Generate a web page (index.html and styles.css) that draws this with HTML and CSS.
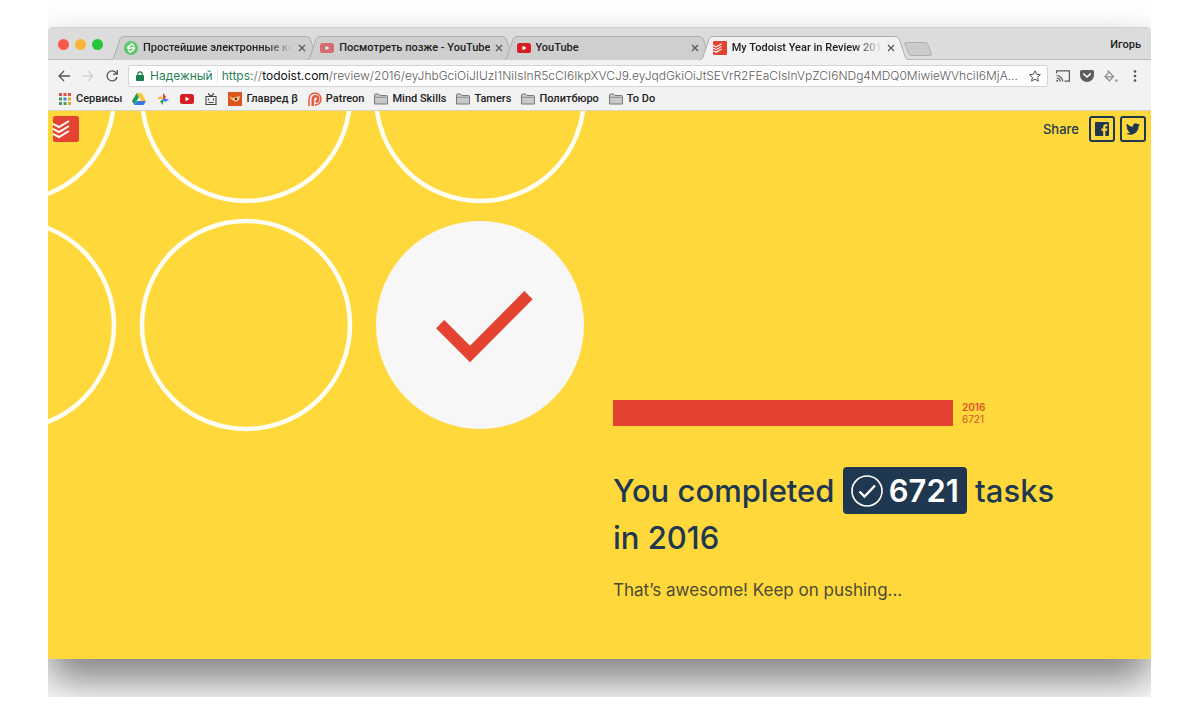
FILE: index.html
```html
<!DOCTYPE html>
<html lang="en">
<head>
<meta charset="utf-8">
<title>My Todoist Year in Review 2016</title>
<link rel="stylesheet" href="styles.css">
</head>
<body>
<svg class="defs" aria-hidden="true">
  <symbol id="tab-shape" viewBox="0 0 210 24" preserveAspectRatio="none"><path d="M0 24C2 24 3 23 4 21L10 3Q11 .5 14 .5H196Q199 .5 200 3L206 21C207 23 208 24 210 24" vector-effect="non-scaling-stroke"/></symbol>
  <symbol id="todoist" viewBox="0 0 26 26"><rect width="26" height="26" rx="2.500" fill="#e44332"/><path d="M0 8l6 3L16 5M0 13l6 3 10-6M0 18l6 3 10-6" fill="none" stroke="#fff" stroke-width="2"/></symbol>
  <symbol id="youtube" viewBox="0 0 14 10"><rect width="14" height="10" rx="2.500" fill="#d51f24"/><path d="M5.500 2.700v4.600L9.500 5z" fill="#fff"/></symbol>
  <symbol id="folder" viewBox="0 0 14 11"><path d="M.5 10.500V1.500Q.5.500 1.500.500H4.500L6 2H12.500Q13.500 2 13.500 3V10.500Z" fill="#c9c8ca" stroke="#79797b"/><path d="M1 3.800H13" stroke="#8f8f91"/></symbol>
  <symbol id="close" viewBox="0 0 8 8"><path d="M1 1l6 6M7 1L1 7" stroke="#555" stroke-width="1.200"/></symbol>
</svg>
<div class="stage">
<div class="window">
  <div class="tabstrip">
    <div class="lights"><button class="light red" aria-label="Close window"></button><button class="light amber" aria-label="Minimize"></button><button class="light green" aria-label="Zoom"></button></div>
    <div class="tabs">
      <div class="tab"><svg class="shape"><use href="#tab-shape"/></svg>
        <svg class="fav" viewBox="0 0 14 14"><circle cx="7" cy="7" r="7" fill="#5cc76c"/><path d="M10 5L7.800 2.800 3.600 6.600Q3.400 7.400 4.400 7.400L9.600 6.600Q10.600 6.600 10.400 7.600L6.400 11.200 4 9" fill="none" stroke="#fff" stroke-width="1.500" stroke-linejoin="round"/></svg>
        <span class="title fade">Простейшие электронные ко</span><button class="x" aria-label="Close tab"><svg><use href="#close"/></svg></button></div>
      <div class="tab"><svg class="shape"><use href="#tab-shape"/></svg><svg class="fav dim"><use href="#youtube"/></svg><span class="title">Посмотреть позже - YouTube</span><button class="x" aria-label="Close tab"><svg><use href="#close"/></svg></button></div>
      <div class="tab"><svg class="shape"><use href="#tab-shape"/></svg><svg class="fav"><use href="#youtube"/></svg><span class="title">YouTube</span><button class="x" aria-label="Close tab"><svg><use href="#close"/></svg></button></div>
      <div class="tab active"><svg class="shape"><use href="#tab-shape"/></svg><svg class="fav"><use href="#todoist"/></svg><span class="title fade">My Todoist Year in Review 201</span><button class="x" aria-label="Close tab"><svg><use href="#close"/></svg></button></div>
    </div>
    <button class="newtab" aria-label="New tab"><svg viewBox="0 0 28 14"><path d="M1.500 .5H22Q23 .5 24 2.500L27.500 12Q28 13.500 26.500 13.500H7Q5.500 13.500 5 12L.8 2Q.3.500 1.500.500Z" fill="#cbcbcb" stroke="#b0b0b0"/></svg></button>
    <button class="profile">Игорь</button>
  </div>
  <div class="toolbar">
    <button class="tool" aria-label="Back"><svg viewBox="0 0 12 12"><path d="M12 6H1M6 1L1 6l5 5" fill="none" stroke="#555" stroke-width="1.300"/></svg></button>
    <button class="tool" aria-label="Forward"><svg viewBox="0 0 12 12"><path d="M0 6h11M6 1l5 5-5 5" fill="none" stroke="#d2d2d2" stroke-width="1.300"/></svg></button>
    <button class="tool" aria-label="Reload"><svg viewBox="0 0 12 12"><path d="M10.500 3.500A5 5 0 1 0 11 7M11.300 0V4.200H7" fill="none" stroke="#555" stroke-width="1.300"/></svg></button>
    <div class="omnibox">
      <svg class="lock" viewBox="0 0 8 10"><rect y="4" width="8" height="6" rx="1" fill="#17804b"/><path d="M1.800 5V3a2.200 2.200 0 0 1 4.400 0v2" fill="none" stroke="#17804b" stroke-width="1.200"/></svg>
      <span class="secure">Надежный</span>
      <label class="origin" for="path"><span class="scheme">https:</span><span class="slashes">//</span>todoist.com</label>
      <input id="path" class="path" value="/review/2016/eyJhbGciOiJIUzI1NiIsInR5cCI6IkpXVCJ9.eyJqdGkiOiJtSEVrR2FEaCIsInVpZCI6NDg4MDQ0MiwieWVhciI6MjA...">
      <button class="tool star" aria-label="Bookmark"><svg viewBox="0 0 12 12"><path d="M6 .8l1.600 3.500 3.800.4-2.800 2.600.8 3.900L6 9.200l-3.400 2 .8-3.900L.6 4.700l3.800-.4z" fill="none" stroke="#555"/></svg></button>
    </div>
    <div class="extensions">
      <button class="tool" aria-label="Cast"><svg viewBox="0 0 14 12"><path d="M.6 3.500V.8H13.400V11.200H8.500M.6 5.500a6 6 0 0 1 6 6M.6 8a3.500 3.500 0 0 1 3.500 3.500" fill="none" stroke="#5a5a5a" stroke-width="1.200"/><circle cx="1.200" cy="10.800" r="1" fill="#5a5a5a"/></svg></button>
      <button class="tool" aria-label="Pocket"><svg viewBox="0 0 14 12"><path d="M1.500 0h11Q14 0 14 1.500V5A7 7 0 0 1 0 5V1.500Q0 0 1.500 0Z" fill="#5e5e60"/><path d="M3.800 4L7 7l3.200-3" fill="none" stroke="#fff" stroke-width="1.700" stroke-linecap="round" stroke-linejoin="round"/></svg></button>
      <button class="tool" aria-label="Colour"><svg viewBox="0 0 14 12"><path d="M3.500 .5l6 6L5.500 10.800 1 6.500 5 2.200M1.500 6.800H9" fill="none" stroke="#8c8c8c" stroke-width="1.200"/><circle cx="12.300" cy="10.500" r="1.300" fill="#999"/></svg></button>
      <button class="tool" aria-label="Menu"><svg viewBox="0 0 14 12"><g fill="#4e4e4e"><circle cx="7" cy="1.500" r="1.300"/><circle cx="7" cy="6" r="1.300"/><circle cx="7" cy="10.500" r="1.300"/></g></svg></button>
    </div>
  </div>
  <nav class="bookmarks">
    <a href="#"><svg class="bm" viewBox="0 0 12 12"><path d="M0 0h3v3H0zM9 0h3v3H9zM4.500 0h3v3h-3z" fill="#e15241"/><path d="M0 4.500h3v3H0z" fill="#3f9d5a"/><path d="M4.500 4.500h3v3h-3z" fill="#4285d4"/><path d="M9 4.500h3v3H9zM9 9h3v3H9z" fill="#e6a52c"/><path d="M0 9h3v3H0zM4.500 9h3v3h-3z" fill="#4c9d63"/></svg>Сервисы</a>
    <a href="#" aria-label="Drive"><svg class="bm" viewBox="0 0 14 12"><path d="M4.700 0L0 8l2.300 4L7 4z" fill="#1f9d58"/><path d="M4.700 0h4.600L14 8H9.300z" fill="#f9c72f"/><path d="M4.700 8H14l-2.300 4H2.300z" fill="#3978e0"/></svg></a>
    <a href="#" aria-label="Photos"><svg class="bm" viewBox="0 0 12 12"><path d="M6 0L9 3.500 6 6z" fill="#e94435"/><path d="M12 6L8.500 9 6 6z" fill="#4285f4"/><path d="M6 12L3 8.500 6 6z" fill="#2f9f57"/><path d="M0 6l3.500-3L6 6z" fill="#f8b82b"/><path d="M6 3.500L8.500 3 8.500 6H6z" fill="#e94435"/><path d="M6 6h2.500L8 8.500H6z" fill="#4285f4"/></svg></a>
    <a href="#" aria-label="YouTube"><svg class="bm"><use href="#youtube"/></svg></a>
    <a href="#" aria-label="TV"><svg class="bm" viewBox="0 0 12 12"><path d="M1 3.500h10v8H1zM3 .5l3 3 3-3" fill="none" stroke="#444" stroke-width="1.100"/><path d="M3.500 5.500v2M8.500 5.500v2M3.500 9.500h5" stroke="#444" stroke-width="1.200"/></svg></a>
    <a href="#"><svg class="bm tall" viewBox="0 0 14 14"><rect width="14" height="14" fill="#dd541f"/><path d="M1 4l4 2 3-1 4-1-1 4-3 2-2-1-2-1z" fill="#f5c590"/><circle cx="8" cy="7" r="1.200" fill="#5b2414"/></svg>Главред β</a>
    <a href="#"><svg class="bm tall" viewBox="0 0 14 14"><path d="M1 14V7a6 6 0 1 1 6 6" fill="none" stroke="#e6593e" stroke-width="1.500"/><path d="M4.800 14V7A2.700 2.700 0 1 1 7.500 9.700" fill="none" stroke="#e6593e" stroke-width="2.600"/></svg>Patreon</a>
    <a href="#"><svg class="bm"><use href="#folder"/></svg>Mind Skills</a>
    <a href="#"><svg class="bm"><use href="#folder"/></svg>Tamers</a>
    <a href="#"><svg class="bm"><use href="#folder"/></svg>Политбюро</a>
    <a href="#"><svg class="bm"><use href="#folder"/></svg>To Do</a>
  </nav>
  <main class="page">
    <svg class="circles" viewBox="0 0 540 324" aria-hidden="true">
      <g fill="none" stroke="#fffef4" stroke-width="4.500"><circle cx="-38" cy="-14" r="104"/><circle cx="198" cy="-14" r="104"/><circle cx="432" cy="-14" r="104"/><circle cx="-38" cy="214" r="104"/><circle cx="198" cy="214" r="104"/></g>
      <circle cx="432" cy="214" r="104" fill="#f7f7f7"/>
      <path d="M388 217.300L396.300 209 422 234.700 476.300 180l8.400 8.300L422 251.300z" fill="#e44332"/>
    </svg>
    <a class="logo" href="#" aria-label="Todoist"><svg><use href="#todoist"/></svg></a>
    <div class="share"><span>Share</span>
      <a href="#" aria-label="Facebook"><svg viewBox="0 0 14 14"><path d="M1 0H13Q14 0 14 1V13Q14 14 13 14H10.300V8.700H12L12.300 6.600H10.300V5.200Q10.300 4.200 11.400 4.200H12.400V2.300H10.800Q8.200 2.300 8.200 4.900V6.600H6.400V8.700H8.200V14H1Q0 14 0 13V1Q0 0 1 0Z" fill="#20384f"/></svg></a>
      <a href="#" aria-label="Twitter"><svg viewBox="0 0 24 24"><path d="M24 4.600a10 10 0 0 1-2.800.8 5 5 0 0 0 2.100-2.700 10 10 0 0 1-3.100 1.200 4.900 4.900 0 0 0-8.400 4.500A14 14 0 0 1 1.700 3.200a4.900 4.900 0 0 0 1.500 6.500 5 5 0 0 1-2.200-.6 4.900 4.900 0 0 0 3.900 4.900 5 5 0 0 1-2.200.1 4.900 4.900 0 0 0 4.600 3.400A10 10 0 0 1 0 19.500a14 14 0 0 0 21.500-12.400A10 10 0 0 0 24 4.600z" fill="#20384f"/></svg></a>
    </div>
    <section class="summary">
      <div class="chart"><div class="bar"></div><div class="legend"><b>2016</b><span>6721</span></div></div>
      <h1>You completed <span class="badge"><svg viewBox="0 0 32 32"><circle cx="16" cy="16" r="15" fill="none" stroke="#fff" stroke-width="1.600"/><path d="M8.500 16.500l5 5L24 10.500" fill="none" stroke="#fff" stroke-width="2.400"/></svg>6721</span> tasks<br>in 2016</h1>
      <p>That’s awesome! Keep on pushing...</p>
    </section>
  </main>
</div>
</div>
</body>
</html>
```
FILE: styles.css
```css
* { box-sizing: border-box; }
body { margin: 0; background: #fff; font-family: Inter, "Noto Sans", sans-serif; color: #222; }
button { border: 0; padding: 0; background: none; font: inherit; color: inherit; }
a { color: inherit; text-decoration: none; }
svg { display: block; }
.defs { position: absolute; width: 0; height: 0; }
.stage { margin: 0 48px; padding: 27px 0 38px; overflow: hidden; }
.window { border-radius: 5px 5px 3px 3px; box-shadow: 0 22px 41px rgba(0, 0, 0, .5); background: #f2f2f2; }

.tabstrip { display: flex; align-items: flex-end; height: 33px; background: #dcdcdc; border-radius: 5px 5px 0 0; border-top: 1px solid #d0d0d0; box-shadow: inset 0 -1px #bdbdbd; }
.lights { display: flex; gap: 6px; width: 62px; padding: 0 0 10px 10px; }
.light { width: 11px; height: 11px; border-radius: 50%; flex: none; }
.red { background: #f9584f; }
.amber { background: #fbb53a; }
.green { background: #27c53d; }
.tabs { display: flex; flex: 0 1 799px; min-width: 0; }
.tab { position: relative; flex: 1 1 0; min-width: 0; height: 24px; display: flex; align-items: center; gap: 5px; padding: 0 14px; margin-right: -14px; font-family: Roboto, "Noto Sans", sans-serif; font-size: 11px; font-weight: 500; color: #222; }
.tab:last-child { margin-right: 0; }
.shape { position: absolute; inset: 0; width: 100%; height: 100%; fill: #cfcfcf; stroke: #acacac; }
.active .shape { fill: #f2f2f2; }
.fav, .title, .x { position: relative; }
.fav { width: 14px; height: 14px; flex: none; }
.dim { opacity: .55; }
.title { flex: 1; min-width: 0; overflow: hidden; white-space: nowrap; line-height: 16px; }
.fade { mask-image: linear-gradient(to right, #000 calc(100% - 28px), transparent); }
.x svg { width: 8px; height: 8px; }
.newtab { margin: 0 0 4px -5px; }
.newtab svg { width: 28px; height: 14px; }
.profile { margin: 0 10px 7px auto; font-family: Roboto, "Noto Sans", sans-serif; font-size: 11px; font-weight: 500; line-height: 16px; }

.toolbar { display: flex; align-items: center; gap: 12px; height: 31px; padding: 0 9px 0 10px; }
.tool { flex: none; }
.tool svg { width: 12px; height: 12px; }
.omnibox { flex: 1; min-width: 0; display: flex; align-items: center; height: 22px; margin-left: -2px; padding: 0 6px 0 7px; background: #fff; border: 1px solid #d4d4d4; border-radius: 3px; font-size: 12px; }
.lock { width: 8px; height: 10px; margin-right: 6px; flex: none; }
.secure { color: #2a8158; padding-right: 4px; margin-right: 4px; border-right: 1px solid #e5e5e5; }
.origin { color: #111; }
.scheme { color: #2a8158; }
.slashes { color: #888; }
.path { flex: 1; min-width: 0; border: 0; padding: 0; outline: 0; background: none; font: inherit; font-weight: 300; color: #5c5c5c; text-overflow: clip; }
.star { margin-left: 4px; }
.extensions { display: flex; gap: 10px; margin-left: -4px; }
.extensions svg { width: 14px; }

.bookmarks { display: flex; align-items: center; gap: 10px; height: 20px; padding: 0 10px 4px; border-bottom: 1px solid #d9d3bc; font-family: Roboto, "Noto Sans", sans-serif; font-size: 11px; font-weight: 500; line-height: 15px; white-space: nowrap; }
.bookmarks a { display: flex; align-items: center; gap: 4px; }
.bm { width: 14px; height: 12px; flex: none; }
.tall { height: 14px; }

.page { position: relative; display: grid; grid-template-columns: 540fr 538fr; column-gap: 25px; background: #ffd83b; color: #20384f; border-radius: 0 0 3px 3px; overflow: hidden; }
.circles { width: 100%; }
.logo { position: absolute; left: 5px; top: 5px; }
.logo svg { width: 26px; height: 26px; }
.share { position: absolute; right: 5px; top: 5px; display: flex; align-items: center; gap: 5px; font-size: 13px; font-weight: 500; }
.share span { margin-right: 5px; }
.share a { display: grid; place-items: center; width: 26px; height: 26px; border: 2px solid #20384f; border-radius: 3px; }
.share svg { width: 14px; height: 14px; }
.summary { padding: 289px 0 57px; }
.chart { display: flex; align-items: center; gap: 9px; color: #d9512b; }
.bar { width: 340px; height: 26px; background: #e44332; }
.legend { display: grid; font-size: 10px; line-height: 12px; }
.legend b { font-weight: 600; }
h1 { margin: 41px 0 0; font-size: 31px; line-height: 47px; font-weight: 500; white-space: nowrap; }
.badge { display: inline-flex; align-items: center; gap: 6px; height: 47px; padding: 0 8px; border-radius: 4px; background: #20384f; color: #fff; font-weight: 600; vertical-align: top; }
.badge svg { width: 32px; height: 32px; }
p { margin: 17px 0 0; font-size: 17px; line-height: 24px; color: #4c4a36; }
```
